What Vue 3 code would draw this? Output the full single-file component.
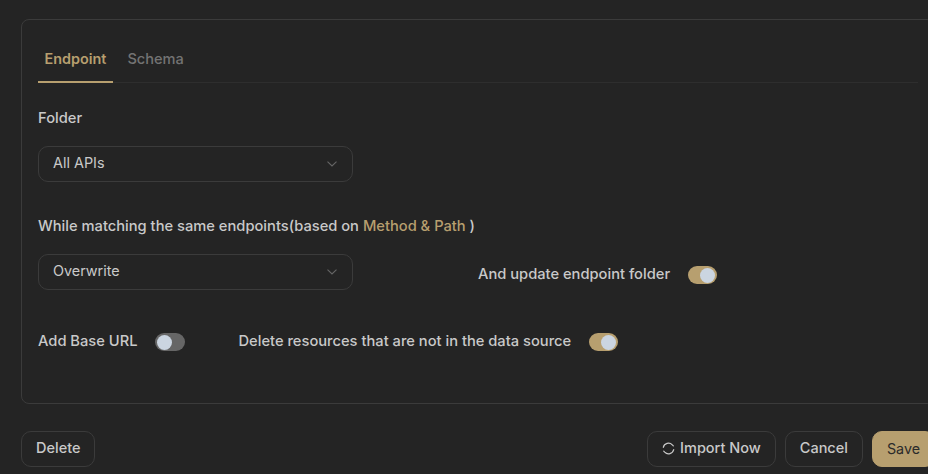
<script setup>
const tabs = [
  { name: 'Endpoint', active: true },
  { name: 'Schema', active: false },
]
</script>

<template>
  <div class="page">
    <section class="card">
      <nav class="tabs">
        <a v-for="t in tabs" :key="t.name" class="tab" :class="{ active: t.active }">{{ t.name }}</a>
      </nav>

      <div class="label first">Folder</div>
      <div class="select">
        <span>All APIs</span>
        <svg class="chev" width="10" height="6" viewBox="0 0 10 6" fill="none"><path d="M.5.7 5 5 9.500.7" stroke="#666" stroke-width="1.1"/></svg>
      </div>

      <div class="label second">While matching the same endpoints(based on <span class="accent">Method &amp; Path</span> )</div>
      <div class="row">
        <div class="select">
          <span>Overwrite</span>
          <svg class="chev" width="10" height="6" viewBox="0 0 10 6" fill="none"><path d="M.5.7 5 5 9.500.7" stroke="#666" stroke-width="1.1"/></svg>
        </div>
        <div class="opt update">
          <span>And update endpoint folder</span>
          <span class="toggle on"><i></i></span>
        </div>
      </div>

      <div class="row third">
        <div class="opt">
          <span>Add Base URL</span>
          <span class="toggle"><i></i></span>
        </div>
        <div class="opt del">
          <span>Delete resources that are not in the data source</span>
          <span class="toggle on"><i></i></span>
        </div>
      </div>
    </section>

    <footer class="footer">
      <button class="btn">Delete</button>
      <div class="right">
        <button class="btn import">
          <svg width="13" height="13" viewBox="0 0 13 13" fill="none" stroke="#c9c9c9" stroke-width="1.2" stroke-linecap="round">
            <path d="M1.300 5.300A5.300 5.300 0 0 1 10.300 2.800L11.300 3.900"/>
            <path d="M11.700 7.700A5.300 5.300 0 0 1 2.700 10.200L1.700 9.100"/>
          </svg>
          Import Now
        </button>
        <button class="btn">Cancel</button>
        <button class="btn save">Save</button>
      </div>
    </footer>
  </div>
</template>

<style>
html, body { margin: 0; background: #242424; }
</style>

<style scoped>
.page {
  width: 928px;
  height: 474px;
  overflow: hidden;
  background: #242424;
  padding: 19px 0 0 21px;
  box-sizing: border-box;
  font-family: Inter, "Liberation Sans", sans-serif;
  font-size: 14.7px;
  font-weight: 500;
  line-height: 20px;
  color: #c9c9c9;
}
.card {
  width: 914px;
  height: 385px;
  box-sizing: border-box;
  border: 1px solid #3b3b3b;
  border-radius: 8px;
  padding: 18px 16px 0;
}
.tabs {
  display: flex;
  height: 45px;
  box-sizing: border-box;
  border-bottom: 1px solid #2e2e2e;
}
.tab {
  height: 45px;
  box-sizing: border-box;
  padding: 11px 6.5px 0;
  margin-right: 8px;
  color: #737373;
  font-size: 14.6px;
}
.tab.active {
  color: #b79f6f;
  font-weight: 600;
  font-size: 14.4px;
  border-bottom: 2px solid #b79f6f;
}
.label.first { margin-top: 25px; }
.label.second { margin-top: 34px; }
.first + .select { margin-top: 18px; }
.second + .row { margin-top: 18px; }
.accent { color: #b79f6f; }
.select {
  width: 315px;
  height: 36px;
  box-sizing: border-box;
  border: 1px solid #3b3b3b;
  border-radius: 10px;
  padding: 0 15px 2px 14px;
  display: flex;
  align-items: center;
  justify-content: space-between;
  font-weight: 400;
  font-size: 14.4px;
}
.select .chev { margin-top: 2px; }
.row {
  display: flex;
  align-items: center;
}
.third { margin-top: 41px; }
.opt {
  display: flex;
  align-items: center;
  gap: 17.5px;
}
.update { margin-left: 125px; margin-top: 4px; }
.del { margin-left: 54px; }
.toggle {
  width: 29.5px;
  height: 18px;
  margin-top: 2px;
  border-radius: 9px;
  background: #666;
  display: flex;
  align-items: center;
  padding: 0 2px;
  box-sizing: border-box;
}
.toggle i {
  width: 15px;
  height: 15px;
  border-radius: 50%;
  background: #cbd5e1;
}
.toggle.on {
  background: #b79f6f;
  justify-content: flex-end;
}
.footer {
  width: 914px;
  margin-top: 27px;
  display: flex;
  justify-content: space-between;
}
.right {
  display: flex;
  gap: 9px;
}
.btn {
  height: 36px;
  box-sizing: border-box;
  border: 1px solid #3b3b3b;
  border-radius: 10px;
  background: transparent;
  color: #c9c9c9;
  font: inherit;
  font-size: 14.5px;
  padding: 0 14px 2px;
  display: flex;
  align-items: center;
  gap: 5px;
}
.save {
  background: #b79f6f;
  border-color: #b79f6f;
  color: #2a2a2a;
  font-weight: 400;
  font-size: 14.3px;
  padding-bottom: 0;
}
</style>
